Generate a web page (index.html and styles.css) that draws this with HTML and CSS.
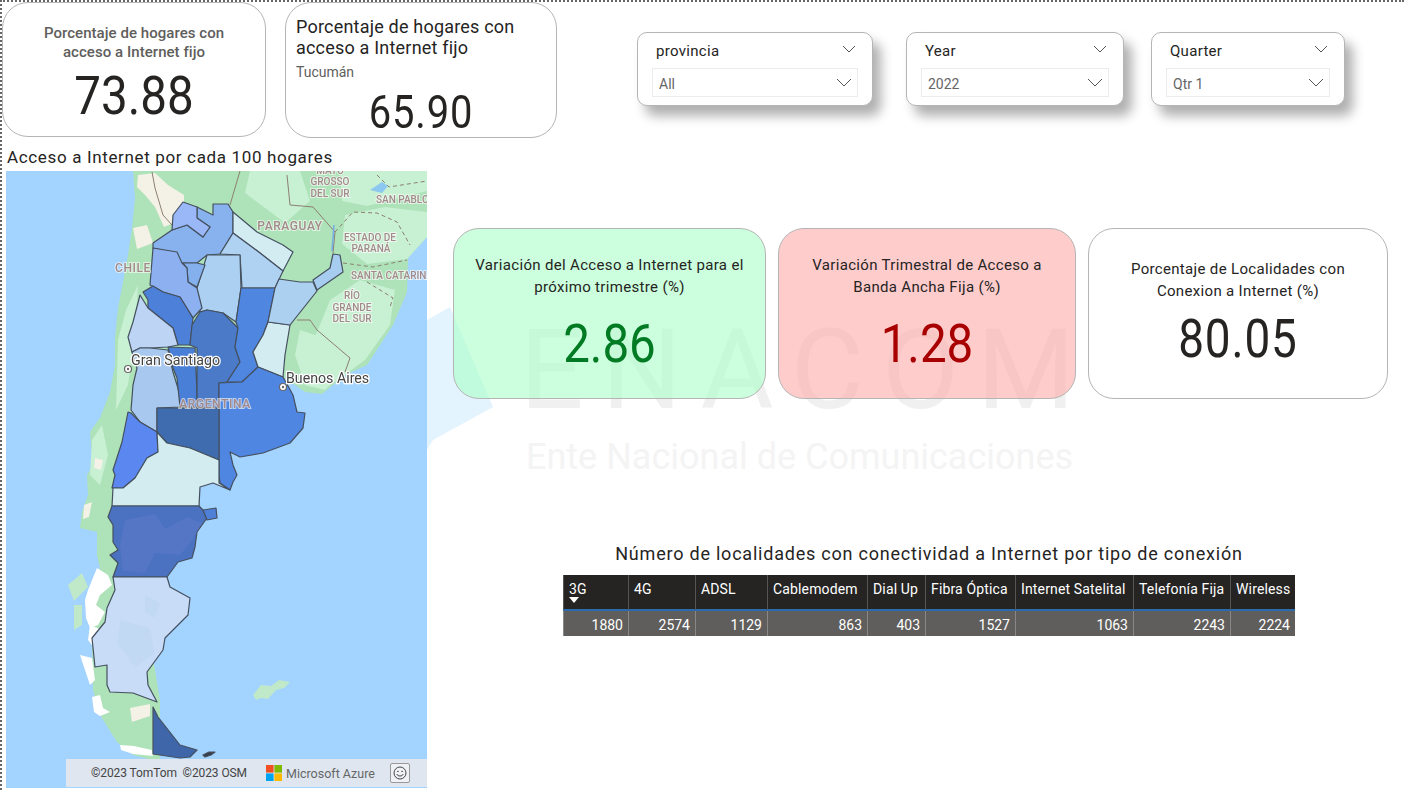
FILE: index.html
```html
<!DOCTYPE html>
<html>
<head>
    <title>Acceso a Internet</title>
    <link rel="stylesheet" href="styles.css">
</head>
<body>
<div class="frame">
    <div class="watermark">
        <svg class="wm-shape" viewBox="0 0 80 160"><polygon points="0,14 25,0 68,100 8,133 0,146" fill="#e3f4ff"/></svg>
        <div class="wm-name">ENACOM</div>
        <div class="wm-sub">Ente Nacional de Comunicaciones</div>
    </div>

    <div class="top-row">
        <div class="card kpi-main">
            <div class="kpi-main-title">Porcentaje de hogares con<br>acceso a Internet fijo</div>
            <div class="big kpi-main-value">73.88</div>
        </div>
        <div class="card kpi-side">
            <div class="kpi-side-title">Porcentaje de hogares con<br>acceso a Internet fijo</div>
            <div class="kpi-side-sub">Tucumán</div>
            <div class="big kpi-side-value">65.90</div>
        </div>
        <div class="slicers">
            <div class="slicer slicer-prov">
                <div class="slicer-head"><span>provincia</span><svg class="chev-s" viewBox="0 0 14 8"><path d="M1 1l6 6 6-6"/></svg></div>
                <div class="slicer-box"><span>All</span><svg class="chev" viewBox="0 0 16 9"><path d="M1 1l7 7 7-7"/></svg></div>
            </div>
            <div class="slicer slicer-year">
                <div class="slicer-head"><span>Year</span><svg class="chev-s" viewBox="0 0 14 8"><path d="M1 1l6 6 6-6"/></svg></div>
                <div class="slicer-box"><span>2022</span><svg class="chev" viewBox="0 0 16 9"><path d="M1 1l7 7 7-7"/></svg></div>
            </div>
            <div class="slicer slicer-qtr">
                <div class="slicer-head"><span>Quarter</span><svg class="chev-s" viewBox="0 0 14 8"><path d="M1 1l6 6 6-6"/></svg></div>
                <div class="slicer-box"><span>Qtr 1</span><svg class="chev" viewBox="0 0 16 9"><path d="M1 1l7 7 7-7"/></svg></div>
            </div>
        </div>
    </div>

    <div class="main-row">
        <div class="map-col">
            <div class="map-title">Acceso a Internet por cada 100 hogares</div>
            <div class="map">
                <svg class="map-svg" viewBox="6 171 421 617">
                    <rect x="6" y="171" width="421" height="617" fill="#a3d3ff"/>
                    <!-- land -->
                    <path fill="#aee2b8" d="M133 171L135 198 132 228 128 255 123 282 118 308 115 338 115 365 110 392 100 418 90 432 93 465 87 475 88 495 82 512 80 528 97 532 97 555 100 568 92 590 92 640 93 690 100 715 117 742 133 755 160 762 160 700 150 640 150 580 150 500 200 470 240 440 285 378 305 392 322 394 345 375 367 365 393 325 407 292 408 258 427 237V171Z"/>
                    <g fill="#c8f0d3">
                        <path d="M250 171h50l10 30-25 22-20-15-20-15z"/>
                        <path d="M345 215l40-8 42 5v25l-20 22-40 5-25-20z"/>
                        <path d="M330 300l30-20 35 10-5 35-25 35-30 22-25 5 5-50z"/>
                        <path d="M340 171h87v20l-60 15-25-5z"/>
                        <path d="M300 330l30 10 20 25-25 25-20-5-10-30z"/>
                        <path d="M118 340l8-30 12-25-4 60-6 40-12 25z"/>
                        <path d="M92 440l10-15 6 30-8 30-10-10z"/>
                    </g>
                    <g fill="#f4f2e6">
                        <path d="M138 175l17-2 13 12 16 10 0 17-8 10-12 5-9-20-10-12-8-8z"/>
                        <path d="M133 228l14-3 6 18-16 6z"/>
                        <path d="M95 458l8 2-2 10-7-2z"/>
                        <path d="M84 505l8-3-3 15-6 2z"/>
                        <path d="M130 708l20-4 0 12-18 6z"/>
                    </g>
                    <g fill="#bfe9c8">
                        <path d="M68 585l14-12 6 14-14 14z"/>
                        <path d="M74 605l8 0 0 20-8 5z"/>
                        <path d="M253 695l8-10 10 1 8-6 11 2-6 6-8 2-8 9-7-1-5 2z"/>
                    </g>
                    <g fill="#fff">
                        <path d="M97 568L108 575 112 585 100 595 96 605 105 612 98 625 90 628 86 618 85 600 88 590Z"/>
                        <path d="M90 625L102 630 100 640 92 645 88 640Z"/>
                        <path d="M80 655L92 658 95 680 90 685 85 670Z"/>
                        <path d="M92 697L100 695 103 708 110 712 100 716 94 712Z"/>
                        <path d="M120 745l14 1 18 4 1 6-20-2-12-4z"/>
                    </g>
                    <!-- borders -->
                    <g fill="none" stroke="#8d7f72" stroke-width="1">
                        <path d="M152 172l3 16 8 27 9 10"/>
                        <path d="M240 171l-10 34"/>
                        <path d="M287 175l3 30 23 2 22 25-2 21"/>
                        <path d="M297 320h13l7 10 33 28-5 14"/>
                    </g>
                    <g fill="none" stroke="#8d7f72" stroke-width="1" stroke-dasharray="4 3">
                        <path d="M335 232l18-20 24 1 20 9 13 23"/>
                        <path d="M377 175l12 12 38-6"/>
                        <path d="M343 263l30 4 34-7"/>
                        <path d="M367 282l26 16-3 9"/>
                    </g>
                    <path d="M334 225l-2 26" stroke="#74ace8" stroke-width="1.5" fill="none"/>
                    <path d="M370 190l12-8 6 4-6 7z" fill="#8cc8f0"/>
                    <!-- provinces -->
                    <g stroke="#45505f" stroke-width="1.2" stroke-linejoin="round">
                        <path fill="#88b2ee" d="M197 207L213 215 213 204 228 204 233 212 233 233 220 254 207 255 197 263 181 263 176 253 153 248 153 243 172 230 187 225 203 237 210 227 197 218Z"/>
                        <path fill="#9ab8f7" d="M183 202L197 207 197 218 210 227 203 237 187 225 172 230 173 215Z"/>
                        <path fill="#d2ecf2" d="M233 212L257 232 283 245 293 252 283 271 260 253 233 233Z"/>
                        <path fill="#b0d2f2" d="M233 233L260 253 283 271 275 288 242 288 240 255 220 254Z"/>
                        <path fill="#abd0f2" d="M207 255L240 255 241 288 236 322 223 313 207 310 200 312 197 288Z"/>
                        <path fill="#85b0ee" d="M183 263L197 263 205 265 197 287 188 282 187 268Z"/>
                        <path fill="#8cb0f0" d="M153 248L177 252 182 263 187 268 188 282 197 288 202 308 193 318 180 297 163 292 150 285Z"/>
                        <path fill="#4d80d8" d="M143 292L153 286 163 292 180 297 193 318 190 345 178 345 173 328 148 308 148 300Z"/>
                        <path fill="#bdd4f5" d="M140 295L148 308 173 328 178 345 168 347 150 348 140 348 132 352 128 337 133 322Z"/>
                        <path fill="#a9c8ef" d="M132 352L140 348 150 348 168 350 173 372 180 395 180 407 157 408 157 432 140 422 131 410 133 385 137 368Z"/>
                        <path fill="#4a7fd8" d="M168 347L195 348 197 392 197 407 180 407 177 378 173 368Z"/>
                        <path fill="#4a7ac8" d="M190 345L192 325 200 312 207 310 223 313 238 328 235 347 240 362 227 382 219 383 219 408 197 408 197 348Z"/>
                        <path fill="#4e86e0" d="M241 288L275 288 268 322 263 335 253 352 258 367 242 382 227 382 240 362 235 347 238 328 236 322Z"/>
                        <path fill="#d2ecf2" d="M268 322L290 325 285 355 283 377 258 367 253 352 263 335Z"/>
                        <path fill="#acd0f0" d="M279 279L300 282 313 282 317 291 290 325 268 322 275 288Z"/>
                        <path fill="#a6ccf0" d="M313 280L330 268 333 254 340 255 343 272 317 290Z"/>
                        <path fill="#4f86e2" d="M219 383L242 382 258 367 283 377 293 395 297 412 305 413 303 428 290 443 263 453 240 457 230 452 233 465 237 475 233 482 230 490 220 483 219 475Z"/>
                        <path fill="#3f6cae" d="M157 408L219 408 219 460 190 448 167 443 157 432Z"/>
                        <path fill="#5a88f0" d="M128 412L131 413 140 422 157 432 158 452 147 458 137 475 135 478 123 488 112 488 115 475 113 470 122 442Z"/>
                        <path fill="#d2ecf0" d="M157 432L167 443 190 448 219 460 219 483 230 490 213 483 200 487 199 506 112 506 113 488 123 488 135 478 147 458 158 452Z"/>
                        <path fill="#4a72c0" d="M112 506L199 506 203 510 207 518 197 532 195 547 192 558 178 562 167 577 113 577 118 563 110 555 118 550 113 542 113 525 108 517Z"/>
                        <path fill="#4f80d8" d="M203 510L216 508 217 518 207 520Z"/>
                        <path fill="#c8dcf8" d="M113 577L167 577 170 587 190 598 188 615 165 638 163 650 147 672 148 685 157 702 133 693 110 692 107 685 107 665 95 667 92 638 105 622 107 608 115 590Z"/>
                        <path fill="#3f66a8" d="M153 707L158 717 180 745 197 750 190 757 180 758 153 754Z"/>
                        <path fill="#3a3f4a" d="M203 755l6-3 6 0-4 3-6 2z"/>
                    </g>
                    <!-- blotches -->
                    <g fill="#5a78c8" opacity=".7">
                        <path d="M125 520l30-6 10 15 22-12 15 6-12 20-10 12-25-2-10 20-22-2-3-25z"/>
                    </g>
                    <g fill="#b9d4ee" opacity=".35">
                        <path d="M145 595l15 8-5 15-10-5z"/>
                        <path d="M120 620l30 8 5 25-20 15-18-25z"/>
                    </g>
                    <!-- labels -->
                    <g class="lbl">
                        <text x="330" y="174" text-anchor="middle">MATO</text>
                        <text x="330" y="185" text-anchor="middle">GROSSO</text>
                        <text x="330" y="197" text-anchor="middle">DEL SUR</text>
                        <text x="376" y="203">SAN PABLO</text>
                        <text x="370" y="241" text-anchor="middle">ESTADO DE</text>
                        <text x="371" y="252" text-anchor="middle">PARANÁ</text>
                        <text x="351" y="279">SANTA CATARINA</text>
                        <text x="352" y="299" text-anchor="middle">RÍO</text>
                        <text x="352" y="311" text-anchor="middle">GRANDE</text>
                        <text x="352" y="322" text-anchor="middle">DEL SUR</text>
                    </g>
                    <g class="lbl lbl-l">
                        <text x="290" y="230" text-anchor="middle">PARAGUAY</text>
                        <text x="133" y="272" text-anchor="middle">CHILE</text>
                        <text x="215" y="408" text-anchor="middle">ARGENTINA</text>
                    </g>
                    <g class="city">
                        <text x="131" y="365">Gran Santiago</text>
                        <text x="286" y="383">Buenos Aires</text>
                    </g>
                    <g fill="#fff" stroke="#666" stroke-width="1.2">
                        <circle cx="128" cy="369" r="3.5"/>
                        <circle cx="283" cy="387" r="3.5"/>
                    </g>
                    <circle cx="128" cy="369" r="1.2" fill="#666"/>
                    <circle cx="283" cy="387" r="1.2" fill="#666"/>
                </svg>
                <div class="attrib">
                    <span class="attrib-copy">©2023 TomTom &nbsp;©2023 OSM</span>
                    <svg class="ms-logo" viewBox="0 0 16 16">
                        <rect width="7.6" height="7.6" fill="#f25022"/>
                        <rect x="8.4" width="7.6" height="7.6" fill="#7fba00"/>
                        <rect y="8.4" width="7.6" height="7.6" fill="#00a4ef"/>
                        <rect x="8.4" y="8.4" width="7.6" height="7.6" fill="#ffb900"/>
                    </svg>
                    <span class="attrib-ms">Microsoft Azure</span>
                    <div class="smile">
                        <svg viewBox="0 0 14 14"><circle cx="7" cy="7" r="6"/><circle cx="4.9" cy="5.4" r=".7" fill="#333" stroke="none"/><circle cx="9.1" cy="5.4" r=".7" fill="#333" stroke="none"/><path d="M3.8 8.2c1 2.4 5.4 2.4 6.4 0"/></svg>
                    </div>
                </div>
            </div>
        </div>

        <div class="right-col">
            <div class="kpi-row">
                <div class="card tile tile-green">
                    <div class="tile-title">Variación del Acceso a Internet para el<br>próximo trimestre (%)</div>
                    <div class="big tile-value val-green">2.86</div>
                </div>
                <div class="card tile tile-red">
                    <div class="tile-title">Variación Trimestral de Acceso a<br>Banda Ancha Fija (%)</div>
                    <div class="big tile-value val-red">1.28</div>
                </div>
                <div class="card tile tile-white">
                    <div class="tile-title">Porcentaje de Localidades con<br>Conexion a Internet (%)</div>
                    <div class="big tile-value">80.05</div>
                </div>
            </div>

            <div class="table-wrap">
                <div class="table-title">Número de localidades con conectividad a Internet por tipo de conexión</div>
                <div class="conn-table">
                    <div class="th">3G<svg class="sort" viewBox="0 0 10 6"><path d="M0 0h10L5 6z"/></svg></div>
                    <div class="th">4G</div>
                    <div class="th">ADSL</div>
                    <div class="th">Cablemodem</div>
                    <div class="th">Dial Up</div>
                    <div class="th">Fibra Óptica</div>
                    <div class="th">Internet Satelital</div>
                    <div class="th">Telefonía Fija</div>
                    <div class="th">Wireless</div>
                    <div class="td">1880</div>
                    <div class="td">2574</div>
                    <div class="td">1129</div>
                    <div class="td">863</div>
                    <div class="td">403</div>
                    <div class="td">1527</div>
                    <div class="td">1063</div>
                    <div class="td">2243</div>
                    <div class="td">2224</div>
                </div>
            </div>
        </div>
    </div>
</div>
</body>
</html>
```

FILE: styles.css
```css
* {
  box-sizing: border-box;
}

body {
  margin: 0;
  background: #fff;
  color: #252423;
  font-family: Roboto, "Liberation Sans", sans-serif;
}

.frame {
  position: relative;
  width: 1404px;
  height: 790px;
  border-top: 2px dotted #666;
  border-left: 2px dotted #666;
  overflow: hidden;
}

/* faded logo behind the page */
.watermark {
  position: absolute;
  top: 0;
  left: 0;
  width: 100%;
  height: 100%;
}

.wm-shape {
  position: absolute;
  left: 423px;
  top: 305px;
  width: 80px;
  height: 160px;
}

.wm-name {
  position: absolute;
  left: 518px;
  top: 303px;
  font-size: 112px;
  letter-spacing: 18px;
  line-height: 130px;
  color: #f0f0f0;
  white-space: nowrap;
}

.wm-sub {
  position: absolute;
  left: 524px;
  top: 434px;
  font-size: 36px;
  line-height: 42px;
  color: #f4f4f4;
  white-space: nowrap;
}

.top-row {
  position: relative;
  display: flex;
  height: 143px;
}

.card {
  background: #fff;
  border: 1px solid #b5b5b5;
  border-radius: 26px;
}

/* no DIN here: Roboto squeezed to the same width */
.big {
  text-align: center;
  color: #252423;
  transform: scaleX(.88);
}

.kpi-main {
  width: 264px;
  height: 135px;
  padding-top: 21px;
  text-align: center;
}

.kpi-main-title {
  font-size: 15px;
  font-weight: 500;
  line-height: 19px;
  letter-spacing: .05px;
  color: #605e5c;
}

.kpi-main-value {
  font-size: 54px;
  line-height: 60px;
  margin-top: 4px;
}

.kpi-side {
  width: 272px;
  height: 136px;
  margin-left: 19px;
  padding: 13px 0 0 10px;
}

.kpi-side-title {
  font-size: 18px;
  line-height: 21px;
  letter-spacing: .2px;
}

.kpi-side-sub {
  font-size: 14px;
  line-height: 18px;
  color: #605e5c;
  margin-top: 5px;
}

.kpi-side-value {
  font-size: 47px;
  letter-spacing: 1px;
  line-height: 54px;
  margin: 4px 0 0 -10px;
  transform: scaleX(.85);
}

.slicers {
  display: flex;
  margin: 30px 0 0 80px;
  align-items: flex-start;
}

.slicer {
  height: 74px;
  background: #fff;
  border: 1px solid #b5b5b5;
  border-radius: 10px;
  padding: 0 14px;
  box-shadow: 8px 10px 12px #00000050;
}

.slicer-prov {
  width: 236px;
}

.slicer-year {
  width: 218px;
  margin-left: 33px;
}

.slicer-qtr {
  width: 194px;
  margin-left: 27px;
}

.slicer-head {
  display: flex;
  justify-content: space-between;
  align-items: center;
  height: 35px;
  padding: 0 2px 0 4px;
  font-size: 15px;
  letter-spacing: .3px;
}

.slicer-box {
  display: flex;
  justify-content: space-between;
  align-items: center;
  height: 29px;
  border: 1px solid #ececec;
  padding: 2px 5px 0 6px;
  font-size: 14px;
  color: #666;
}

.chev-s {
  width: 14px;
  height: 8px;
  margin-top: -4px;
}

.chev {
  width: 16px;
  height: 9px;
  margin-top: -3px;
}

.chev-s path,
.chev path {
  fill: none;
  stroke: #555;
  stroke-width: 1;
}

.main-row {
  position: relative;
  display: flex;
}

.map-col {
  width: 421px;
  margin-left: 4px;
}

.map-title {
  font-size: 17px;
  line-height: 20px;
  height: 24px;
  margin: 2px 0 0 1px;
  letter-spacing: .65px;
  white-space: nowrap;
}

.map {
  position: relative;
  width: 421px;
  height: 617px;
}

.map-svg {
  display: block;
  width: 421px;
  height: 617px;
  filter: blur(.4px);
}

.lbl text {
  font: 500 10px Roboto, sans-serif;
  fill: #a38a8a;
  stroke: #fff;
  stroke-width: 2px;
  stroke-opacity: .6;
  paint-order: stroke;
}

.lbl-l text {
  font-size: 12px;
  letter-spacing: .6px;
}

.city text {
  font: 14.2px Roboto, sans-serif;
  fill: #444;
  stroke: #fff;
  stroke-width: 2.5px;
  paint-order: stroke;
}

.attrib {
  position: absolute;
  left: 60px;
  right: 0;
  bottom: 1px;
  height: 28px;
  display: flex;
  align-items: center;
  background: #dfe6f0;
  font-size: 12px;
  color: #444;
}

.attrib-copy {
  margin-left: 25px;
  width: 175px;
  letter-spacing: -.1px;
  white-space: nowrap;
}

.ms-logo {
  width: 16px;
  height: 16px;
  margin-right: 4px;
}

.attrib-ms {
  font-size: 12.5px;
  color: #666;
  white-space: nowrap;
}

.smile {
  width: 20px;
  height: 20px;
  margin-left: 15px;
  padding: 2px;
  border: 1px solid #999;
  border-radius: 2px;
  background: #eef1f6;
}

.smile svg {
  display: block;
  fill: none;
  stroke: #333;
  stroke-width: .9;
}

.right-col {
  margin-left: 26px;
}

.kpi-row {
  display: flex;
  gap: 12px;
  margin-top: 83px;
}

.tile {
  height: 171px;
  text-align: center;
}

.tile-green {
  width: 313px;
  background: rgba(170, 255, 198, .6);
  padding-top: 25px;
}

.tile-red {
  width: 298px;
  background: rgba(255, 170, 170, .6);
  padding-top: 25px;
}

.tile-white {
  width: 300px;
  padding-top: 29px;
}

.tile-title {
  font-size: 15px;
  line-height: 22px;
  letter-spacing: .33px;
}

.tile-value {
  font-size: 54px;
  line-height: 60px;
  margin-top: 16px;
}

.tile-white .tile-value {
  letter-spacing: 1px;
  margin-top: 7px;
  transform: scaleX(.85);
}

.val-green {
  color: #007a23;
}

.val-red {
  color: #a80000;
}

.table-wrap {
  position: relative;
  width: 732px;
  margin: 143px 0 0 110px;
}

.table-title {
  font-size: 18px;
  line-height: 24px;
  text-align: center;
  letter-spacing: .78px;
  white-space: nowrap;
  margin-bottom: 9px;
}

.conn-table {
  display: grid;
  grid-template-columns: 65px 67px 72px 100px 58px 90px 118px 97px 65px;
  font-size: 14px;
  color: #fff;
}

.th {
  position: relative;
  height: 36px;
  padding: 6px 0 0 5px;
  background: #252423;
  border-left: 1px solid #555;
  border-bottom: 2px solid #2b6cb0;
  letter-spacing: .15px;
  white-space: nowrap;
}

.td {
  height: 25px;
  line-height: 28px;
  padding-right: 5px;
  background: #605e5c;
  border-left: 1px solid #8a8886;
  text-align: right;
}

.sort {
  position: absolute;
  left: 5px;
  top: 22px;
  width: 10px;
  height: 6px;
  fill: #fff;
}
```
